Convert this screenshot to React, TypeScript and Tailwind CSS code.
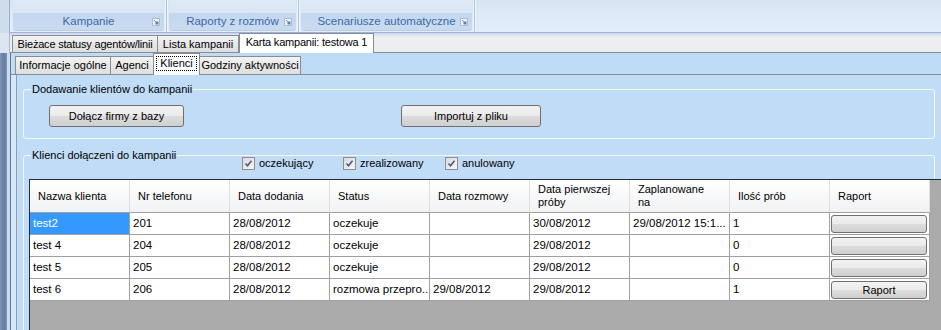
import React from 'react';

function Launcher() {
  return (
    <svg width="8" height="8" viewBox="0 0 8 8">
      <rect x="0.5" y="0.5" width="7" height="7" fill="#eef3fa" stroke="#a9bcd8" />
      <rect x="3.5" y="3.5" width="3" height="3" fill="#6d819f" />
      <path d="M2 2 L4 4" stroke="#8094b2" />
    </svg>
  );
}

function RibbonGroup({ className, label }: { className: string; label: string }) {
  return (
    <div className={'flex flex-col shrink-0 ' + className}>
      <div className="h-[13px] bg-gradient-to-b from-[#dfe9f6] to-[#d9e5f4] mx-[1px]" />
      <div className="h-[18px] mx-[1px] bg-gradient-to-b from-[#c3d7ef] to-[#c9dbf0] rounded-b-[3px] border-b border-[#b9cce6] grid grid-cols-[1fr_auto_1fr] items-center">
        <span />
        <span className="text-[11.5px] leading-none text-[#4169a5] whitespace-nowrap">{label}</span>
        <span className="flex justify-end pr-[4px]">
          <Launcher />
        </span>
      </div>
    </div>
  );
}

function RibbonSep() {
  return (
    <div className="w-[3px] shrink-0 flex">
      <div className="w-[1px] bg-[#eef4fb]" />
      <div className="w-[1px] bg-[#b3c5de]" />
      <div className="w-[1px] bg-[#eef4fb]" />
    </div>
  );
}

function Check() {
  return (
    <div className="w-[13px] h-[13px] shrink-0 border border-[#8e8f8f] bg-gradient-to-br from-[#d9dadb] to-[#f6f6f6] flex items-center justify-center">
      <svg width="9" height="9" viewBox="0 0 9 9">
        <path d="M1.5 4.5 L3.5 6.8 L7.5 1.8" stroke="#4b5b7c" strokeWidth="1.6" fill="none" />
      </svg>
    </div>
  );
}

function WinButton({ className, children }: { className: string; children?: React.ReactNode }) {
  return (
    <div
      className={
        'shrink-0 rounded-[3px] border border-[#707070] bg-[linear-gradient(to_bottom,#f2f2f2_0%,#ebebeb_50%,#dddddd_51%,#cfcfcf_100%)] flex items-center justify-center text-[11px] leading-none ' +
        className
      }
    >
      {children}
    </div>
  );
}

const headers: string[][] = [
  ['Nazwa klienta'],
  ['Nr telefonu'],
  ['Data dodania'],
  ['Status'],
  ['Data rozmowy'],
  ['Data pierwszej', 'próby'],
  ['Zaplanowane', 'na'],
  ['Ilość prób'],
  ['Raport'],
];

const rows: string[][] = [
  ['test2', '201', '28/08/2012', 'oczekuje', '', '30/08/2012', '29/08/2012 15:1...', '1', ''],
  ['test 4', '204', '28/08/2012', 'oczekuje', '', '29/08/2012', '', '0', ''],
  ['test 5', '205', '28/08/2012', 'oczekuje', '', '29/08/2012', '', '0', ''],
  ['test 6', '206', '28/08/2012', 'rozmowa przepro...', '29/08/2012', '29/08/2012', '', '1', 'Raport'],
];

export default function App() {
  return (
    <div className="w-[941px] h-[330px] overflow-hidden flex bg-[#c0dcf7] text-black font-['Liberation_Sans',Arial,sans-serif] text-[11px]">
      {/* left window frame */}
      <div className="w-[10px] shrink-0 flex flex-col">
        <div className="h-[33px] bg-[#cfdcec] border-r border-[#9fb2cf]" />
        <div className="h-[20px] bg-[#dce6f2] border-r border-[#a9b9cf]" />
        <div className="flex-1 flex">
          <div className="w-[7px] bg-[linear-gradient(to_right,#7f95b5,#647a9c_60%,#8197b6)]" />
          <div className="w-[3px] bg-[#c8dcf0]" />
        </div>
      </div>

      {/* main */}
      <div className="flex-1 flex flex-col min-w-0">
        {/* ribbon */}
        <div className="h-[33px] shrink-0 flex border-b border-[#9fb2d8] bg-gradient-to-b from-[#d9e4f2] to-[#e4eefb] pl-[2px]">
          <RibbonGroup className="w-[153px]" label="Kampanie" />
          <RibbonSep />
          <RibbonGroup className="w-[129px]" label="Raporty z rozmów" />
          <RibbonSep />
          <RibbonGroup className="w-[173px]" label="Scenariusze automatyczne" />
          <RibbonSep />
          <div className="flex-1" />
        </div>

        {/* tab strip 1 */}
        <div className="h-[20px] shrink-0 flex items-end pl-[2px] border-b border-[#8c8c8c] bg-[linear-gradient(to_bottom,#c9d7ee,#eeeff3_4px,#eeeef2)]">
          <div className="w-[146px] h-[17px] shrink-0 border border-b-0 border-[#898c95] bg-gradient-to-b from-[#f3f3f3] to-[#dedede] flex items-center justify-center whitespace-nowrap tracking-[-0.2px]">
            Bieżace statusy agentów/linii
          </div>
          <div className="w-[82px] h-[17px] shrink-0 -ml-[1px] border border-b-0 border-[#898c95] bg-gradient-to-b from-[#f3f3f3] to-[#dedede] flex items-center justify-center whitespace-nowrap">
            Lista kampanii
          </div>
          <div className="relative z-10 -mb-[1px] w-[135px] h-[20px] shrink-0 border border-b-0 border-[#898c95] bg-white flex items-center justify-center whitespace-nowrap pb-[2px] tracking-[-0.2px]">
            Karta kampanii: testowa 1
          </div>
        </div>

        {/* lower */}
        <div className="flex-1 flex min-h-0">
          <div className="w-[1px] shrink-0 bg-[#66778d]" />
          <div className="flex-1 flex flex-col min-w-0">
            {/* tab strip 2 */}
            <div className="h-[22px] shrink-0 flex items-end pl-[4px] border-b border-[#8c8c8c] bg-[#bedcf8]">
              <div className="w-[96px] h-[18px] shrink-0 border border-b-0 border-[#898c95] bg-gradient-to-b from-[#f3f3f3] to-[#dedede] flex items-center justify-center whitespace-nowrap">
                Informacje ogólne
              </div>
              <div className="w-[44px] h-[18px] shrink-0 -ml-[1px] border border-b-0 border-[#898c95] bg-gradient-to-b from-[#f3f3f3] to-[#dedede] flex items-center justify-center whitespace-nowrap">
                Agenci
              </div>
              <div className="relative z-10 -mb-[1px] w-[47px] h-[22px] shrink-0 -ml-[1px] border border-b-0 border-[#898c95] bg-[#fbfdff] flex items-center justify-center pb-[2px]">
                <span className="border border-dotted border-black px-[3px] h-[15px] flex items-center">Klienci</span>
              </div>
              <div className="w-[102px] h-[18px] shrink-0 -ml-[1px] border border-b-0 border-[#898c95] bg-gradient-to-b from-[#f3f3f3] to-[#dedede] flex items-center justify-center whitespace-nowrap">
                Godziny aktywności
              </div>
            </div>

            {/* content */}
            <div className="flex-1 flex min-h-0">
              <div className="w-[5px] shrink-0 bg-[#d6e7f8]" />
              <div className="w-[1px] shrink-0 bg-[#8e9fb3]" />
              <div className="flex-1 flex flex-col min-w-0 bg-[#c0dcf7]">
                {/* group 1 */}
                <div className="relative mt-[14px] mx-[6px] h-[50px] shrink-0 border border-[#f4f9fe] rounded-[3px]">
                  <span className="absolute -top-[7px] left-[7px] px-[1px] bg-[#c0dcf7] leading-[13px] whitespace-nowrap">
                    Dodawanie klientów do kampanii
                  </span>
                  <div className="flex pt-[15px] pl-[25px]">
                    <WinButton className="w-[135px] h-[22px]">Dołącz firmy z bazy</WinButton>
                    <WinButton className="w-[140px] h-[22px] ml-[217px]">Importuj z pliku</WinButton>
                  </div>
                </div>

                {/* group 2 */}
                <div className="relative mt-[16px] ml-[6px] mr-[6px] h-[220px] shrink-0 border border-[#f4f9fe] rounded-[3px]">
                  <span className="absolute -top-[7px] left-[7px] px-[1px] bg-[#c0dcf7] leading-[13px] whitespace-nowrap">
                    Klienci dołączeni do kampanii
                  </span>
                  <div className="flex pl-[218px] pt-[1px] h-[14px] mb-[9px]">
                    <div className="w-[101px] flex items-center gap-[4px]">
                      <Check />
                      <span className="leading-none">oczekujący</span>
                    </div>
                    <div className="w-[102px] flex items-center gap-[4px]">
                      <Check />
                      <span className="leading-none">zrealizowany</span>
                    </div>
                    <div className="w-[100px] flex items-center gap-[4px]">
                      <Check />
                      <span className="leading-none">anulowany</span>
                    </div>
                  </div>

                  {/* data grid */}
                  <div className="ml-[5px] w-[920px] h-[160px] border-t border-l border-[#242b36] bg-[#ababab] flex flex-col">
                    <div className="flex h-[33px] shrink-0">
                      {headers.map((h, i) => (
                        <div
                          key={i}
                          className="w-[100px] shrink-0 border-r border-b border-r-[#dedede] border-b-[#a0a0a0] bg-gradient-to-b from-white to-[#f1f2f4] flex flex-col justify-center pl-[8px] leading-[13px] whitespace-nowrap"
                        >
                          {h.map((line, j) => (
                            <span key={j}>{line}</span>
                          ))}
                        </div>
                      ))}
                    </div>
                    {rows.map((r, ri) => (
                      <div key={ri} className="flex h-[22px] shrink-0">
                        {r.map((c, ci) => {
                          if (ci === 8) {
                            return (
                              <div
                                key={ci}
                                className="w-[100px] shrink-0 border-r border-b border-[#a0a0a0] bg-white pl-[1px] pr-[2px] pt-[2px] pb-[1px] flex"
                              >
                                <WinButton className="flex-1 h-[18px] text-[11.5px]">{c}</WinButton>
                              </div>
                            );
                          }
                          const sel = ri === 0 && ci === 0;
                          return (
                            <div
                              key={ci}
                              className={
                                'w-[100px] shrink-0 border-r border-b border-[#a0a0a0] flex items-center pl-[3px] whitespace-nowrap overflow-hidden text-[11.5px] ' +
                                (sel ? 'bg-[#3399ff] text-white' : 'bg-white')
                              }
                            >
                              {c}
                            </div>
                          );
                        })}
                      </div>
                    ))}
                  </div>
                </div>
              </div>
            </div>
          </div>
        </div>
      </div>
    </div>
  );
}
